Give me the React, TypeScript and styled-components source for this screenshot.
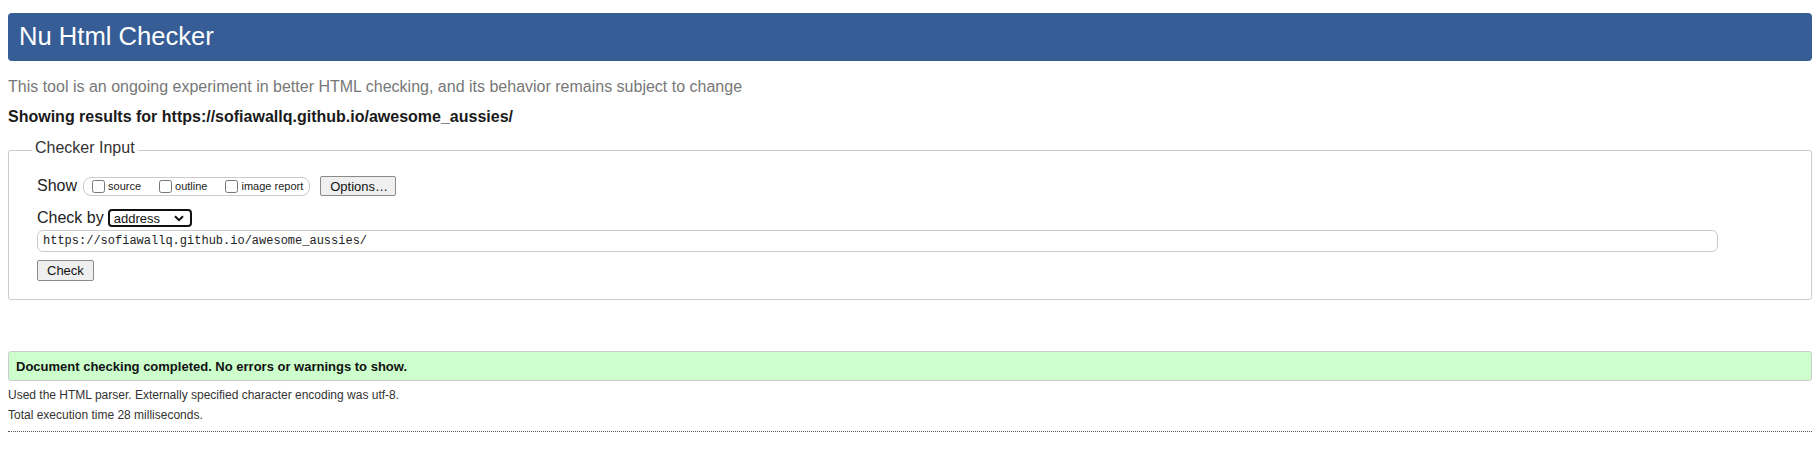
import { createGlobalStyle } from 'styled-components'
import styled from 'styled-components'

const GlobalStyle = createGlobalStyle`
  html, body {
    margin: 0;
    padding: 0;
    background: #ffffff;
  }
  body {
    font-family: "Liberation Sans", Arial, sans-serif;
    color: #222;
  }
`

const Page = styled.div`
  padding: 13px 8px 0;
`

const Header = styled.h1`
  margin: 0;
  height: 48px;
  line-height: 46px;
  padding-left: 11px;
  background: #365d95;
  border-radius: 4px;
  color: #ffffff;
  font-size: 25.6px;
  font-weight: normal;
`

const About = styled.p`
  margin: 16px 0 0;
  font-size: 16px;
  line-height: 20px;
  color: #777;
`

const Results = styled.p`
  margin: 10px 0 0;
  font-size: 16px;
  line-height: 20px;
  font-weight: bold;
  color: #1a1a1a;
`

const InputSet = styled.fieldset`
  margin: 11px 0 0;
  padding: 14px 28px 18px;
  border: 1px solid #cccccc;
  border-radius: 3px;
  min-width: 0;
`

const Legend = styled.legend`
  margin-left: -5px;
  padding: 0 3px 4px;
  font-size: 16px;
  line-height: 20px;
  color: #333;
`

const Row = styled.div<{ $gap?: number; $top?: number }>`
  display: flex;
  align-items: center;
  gap: ${({ $gap }) => $gap ?? 0}px;
  margin-top: ${({ $top }) => $top ?? 0}px;
`

const Label = styled.span`
  font-size: 16px;
  line-height: 18px;
  color: #222;
`

const OptionGroup = styled.div`
  display: flex;
  align-items: center;
  gap: 18px;
  height: 17px;
  margin-left: 6px;
  padding: 0 6px 0 8px;
  border: 1px solid #cccccc;
  border-radius: 8px;
`

const Option = styled.label`
  display: flex;
  align-items: center;
  gap: 3px;
  font-size: 11px;
  color: #222;
`

const Box = styled.input`
  width: 13px;
  height: 13px;
  margin: 0;
`

const Button = styled.button<{ $width?: number; $height?: number; $left?: number }>`
  width: ${({ $width }) => ($width ? `${$width}px` : 'auto')};
  height: ${({ $height }) => $height ?? 20}px;
  margin-left: ${({ $left }) => $left ?? 0}px;
  padding: 0 9px;
  font-family: "Liberation Sans", Arial, sans-serif;
  font-size: 13px;
  color: #111;
  background: #efefef;
  border: 1px solid #8a8a8a;
  border-radius: 2px;
`

const SelectBox = styled.div`
  display: flex;
  align-items: center;
  justify-content: space-between;
  box-sizing: border-box;
  width: 84px;
  height: 18px;
  padding: 0 6px 0 4px;
  border: 2px solid #111;
  border-radius: 4px;
  font-size: 13px;
  color: #111;
`

const UrlInput = styled.div`
  box-sizing: border-box;
  width: 1681px;
  height: 22px;
  padding-left: 5px;
  border: 1px solid #cccccc;
  border-radius: 6px;
  font-family: "Liberation Mono", "DejaVu Sans Mono", monospace;
  font-size: 12px;
  line-height: 20px;
  color: #222;
`

const Success = styled.div`
  margin-top: 51px;
  box-sizing: border-box;
  height: 30px;
  display: flex;
  align-items: center;
  padding-left: 7px;
  background: #ccffcc;
  border: 1px solid #cccccc;
  border-radius: 3px;
  font-size: 13px;
  font-weight: bold;
  color: #111;
`

const Details = styled.div`
  margin-top: 4px;
  font-size: 12px;
  line-height: 20px;
  color: #333;
`

const Rule = styled.hr`
  margin: 6px 0 0;
  border: 0;
  border-top: 1px dotted #555;
`

const options = ['source', 'outline', 'image report']

export default function App() {
  return (
    <Page>
      <GlobalStyle />
      <Header>Nu Html Checker</Header>
      <About>
        This tool is an ongoing experiment in better HTML checking, and its behavior remains subject to change
      </About>
      <Results>Showing results for https://sofiawallq.github.io/awesome_aussies/</Results>
      <InputSet>
        <Legend>Checker Input</Legend>
        <Row>
          <Label>Show</Label>
          <OptionGroup>
            {options.map((o) => (
              <Option key={o}>
                <Box type="checkbox" />
                {o}
              </Option>
            ))}
          </OptionGroup>
          <Button $left={10} $width={76}>Options…</Button>
        </Row>
        <Row $top={13} $gap={4}>
          <Label>Check by</Label>
          <SelectBox>
            address
            <svg width="10" height="7" viewBox="0 0 10 7">
              <path d="M1 1.2 L5 5.2 L9 1.2" fill="none" stroke="#111" strokeWidth="2" />
            </svg>
          </SelectBox>
        </Row>
        <Row $top={3}>
          <UrlInput>https://sofiawallq.github.io/awesome_aussies/</UrlInput>
        </Row>
        <Row $top={8}>
          <Button $height={21}>Check</Button>
        </Row>
      </InputSet>
      <Success>Document checking completed. No errors or warnings to show.</Success>
      <Details>
        <div>Used the HTML parser. Externally specified character encoding was utf-8.</div>
        <div>Total execution time 28 milliseconds.</div>
      </Details>
      <Rule />
    </Page>
  )
}
